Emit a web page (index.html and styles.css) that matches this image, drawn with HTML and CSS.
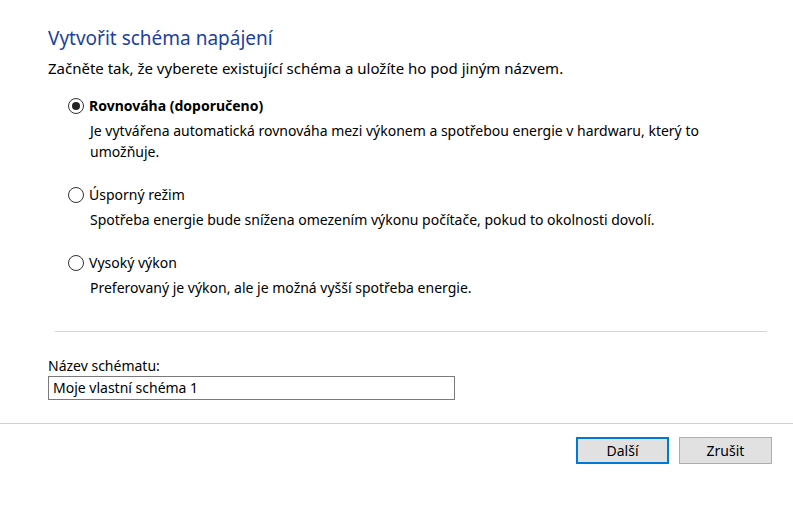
FILE: index.html
```html
<!DOCTYPE html>
<html lang="cs">
<head>
<meta charset="utf-8">
<title>Vytvořit schéma napájení</title>
<link rel="stylesheet" href="styles.css">
</head>
<body>
<div class="dialog">
  <div class="content">
    <h1 class="title">Vytvořit schéma napájení</h1>
    <p class="intro">Začněte tak, že vyberete existující schéma a uložíte ho pod jiným názvem.</p>
    <div class="options">
      <div class="option">
        <label class="opt-label bold"><span class="radio checked"></span>Rovnováha (doporučeno)</label>
        <p class="desc">Je vytvářena automatická rovnováha mezi výkonem a spotřebou energie v hardwaru, který to umožňuje.</p>
      </div>
      <div class="option">
        <label class="opt-label"><span class="radio"></span>Úsporný režim</label>
        <p class="desc">Spotřeba energie bude snížena omezením výkonu počítače, pokud to okolnosti dovolí.</p>
      </div>
      <div class="option">
        <label class="opt-label"><span class="radio"></span>Vysoký výkon</label>
        <p class="desc">Preferovaný je výkon, ale je možná vyšší spotřeba energie.</p>
      </div>
    </div>
    <div class="sep"></div>
    <div class="name-field">
      <div class="field-label">Název schématu:</div>
      <div class="input">Moje vlastní schéma 1</div>
    </div>
  </div>
  <div class="footer">
    <button class="btn primary">Další</button>
    <button class="btn">Zrušit</button>
  </div>
</div>
</body>
</html>
```
FILE: styles.css
```css
html, body {
  margin: 0;
  padding: 0;
  background: #ffffff;
}
body {
  font-family: "Noto Sans", "Open Sans", sans-serif;
  font-size: 14px;
  color: #000000;
  width: 793px;
  height: 507px;
  overflow: hidden;
}
.dialog {
  display: flex;
  flex-direction: column;
}
.content {
  padding: 24px 0 0 48px;
}
.title {
  margin: 0;
  font-weight: normal;
  font-size: 19px;
  line-height: 28px;
  color: #1e3f9e;
}
.intro {
  margin: 6px 0 0 0;
  font-size: 15px;
  line-height: 20px;
}
.options {
  margin-top: 18px;
  padding-left: 20px;
}
.option {
  margin-bottom: 23px;
}
.opt-label {
  display: flex;
  align-items: center;
  gap: 5px;
  line-height: 20px;
}
.bold {
  font-weight: bold;
}
.radio {
  width: 14px;
  height: 14px;
  border: 1px solid #333333;
  border-radius: 50%;
  box-sizing: content-box;
  display: inline-block;
  position: relative;
}
.radio.checked::after {
  content: "";
  position: absolute;
  left: 3px;
  top: 3px;
  width: 8px;
  height: 8px;
  border-radius: 50%;
  background: #222222;
}
.desc {
  margin: 4px 0 0 22px;
  line-height: 21px;
  width: 660px;
}
.sep {
  margin: 33px 26px 0 7px;
  height: 1px;
  background: #d6d6d6;
}
.name-field {
  margin-top: 24px;
}
.field-label {
  line-height: 20px;
}
.input {
  width: 401px;
  height: 22px;
  border: 1px solid #7a7a7a;
  padding-left: 4px;
  line-height: 22px;
}
.footer {
  margin-top: 23px;
  border-top: 1px solid #cfcfcf;
  display: flex;
  justify-content: flex-end;
  gap: 10px;
  padding: 13px 21px 0 0;
}
.btn {
  font-family: inherit;
  font-size: 14px;
  width: 93px;
  height: 27px;
  background: #e1e1e1;
  border: 1px solid #adadad;
  color: #000;
  padding: 0;
}
.btn.primary {
  border: 2px solid #0078d7;
}
```
